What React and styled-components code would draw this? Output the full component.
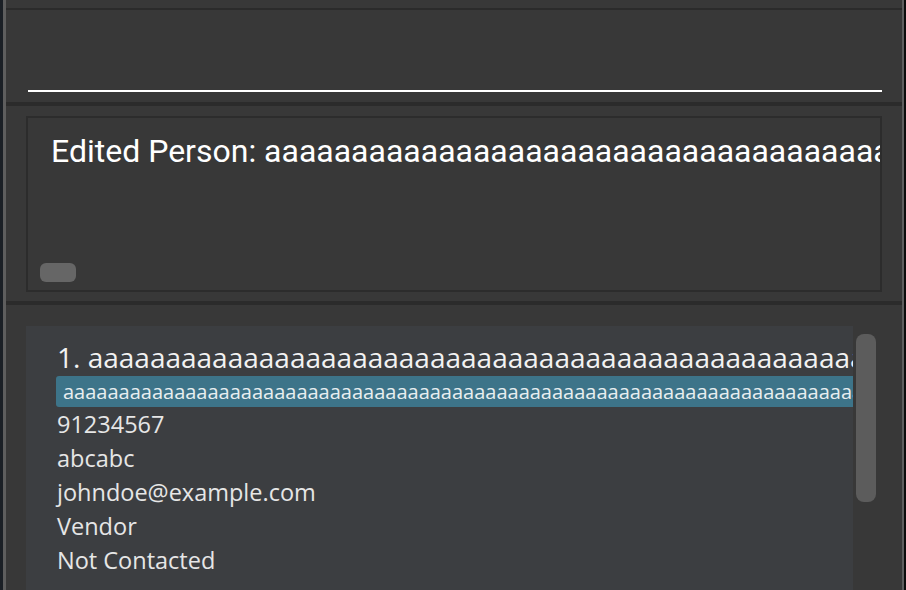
import React from 'react';
import styled, { createGlobalStyle } from 'styled-components';

const GlobalStyle = createGlobalStyle`
    html, body {
        margin: 0;
        padding: 0;
        background: #383838;
        overflow: hidden;
    }
`;

const Window = styled.div`
    display: flex;
    flex-direction: column;
    width: 906px;
    height: 590px;
    box-sizing: border-box;
    background: #383838;
    border-left: 3px solid #1b2026;
    border-right: 2px solid #0c0c0c;
    font-family: "Open Sans", "Liberation Sans", sans-serif;
    color: #ffffff;
    overflow: hidden;
`;

const Inner = styled.div`
    display: flex;
    flex-direction: column;
    flex: 1;
    min-height: 0;
    border-left: 3px solid #5e5e5e;
    border-right: 2px solid #5e5e5e;
`;

const Divider = styled.div`
    flex: none;
    height: ${props => props.size}px;
    background: #2b2b2b;
`;

const TopStub = styled.div`
    flex: none;
    height: 8px;
`;

const CommandPane = styled.div`
    flex: none;
    height: 92px;
    box-sizing: border-box;
    display: flex;
    align-items: flex-end;
    padding: 0 20px 10px 22px;
`;

const CommandInput = styled.div`
    flex: 1;
    height: 0;
    border-bottom: 2px solid #ffffff;
`;

const ResultPane = styled.div`
    flex: none;
    height: 195px;
    box-sizing: border-box;
    padding: 10px 20px 9px 20px;
    display: flex;
`;

const ResultBox = styled.div`
    position: relative;
    flex: 1;
    border: 2px solid #2c2c2c;
    overflow: hidden;
    padding: 13px 0 0 23px;
`;

const ResultText = styled.div`
    font-family: Roboto, "Open Sans", sans-serif;
    font-size: 32px;
    line-height: 40px;
    white-space: nowrap;
    color: #ffffff;
`;

const HThumb = styled.div`
    position: absolute;
    left: 12px;
    bottom: 8px;
    width: 36px;
    height: 19px;
    border-radius: 6px;
    background: #666666;
`;

const ListPane = styled.div`
    flex: 1;
    min-height: 0;
    display: flex;
    padding: 21px 23px 0 20px;
    overflow: hidden;
`;

const Card = styled.div`
    flex: 1;
    min-width: 0;
    background: #3c3e41;
    padding: 13px 0 0 31px;
    overflow: hidden;
`;

const Gutter = styled.div`
    flex: none;
    width: 26px;
    display: flex;
    justify-content: center;
    padding-top: 8px;
`;

const VThumb = styled.div`
    width: 20px;
    height: 168px;
    border-radius: 8px;
    background: #5c5c5c;
`;

const Title = styled.div`
    font-size: 28px;
    line-height: 36px;
    white-space: nowrap;
    color: #f2f2f2;
`;

const Tag = styled.div`
    margin: 1px 0 0 -1px;
    height: 31px;
    line-height: 31px;
    padding-left: 7px;
    background: #3d7489;
    border-radius: 3px 0 0 3px;
    font-size: 20px;
    white-space: nowrap;
    overflow: hidden;
    color: #e8eef0;
`;

const Field = styled.div`
    font-size: 23.5px;
    line-height: 34px;
    white-space: nowrap;
    color: #e6e6e6;
`;

const longName = 'a'.repeat(60);

export default function App() {
    return (
        <>
            <GlobalStyle />
            <Window>
                <Inner>
                    <TopStub />
                    <Divider size={2} />
                    <CommandPane>
                        <CommandInput />
                    </CommandPane>
                    <Divider size={4} />
                    <ResultPane>
                        <ResultBox>
                            <ResultText>Edited Person: {longName}</ResultText>
                            <HThumb />
                        </ResultBox>
                    </ResultPane>
                    <Divider size={4} />
                    <ListPane>
                        <Card>
                            <Title>1. {longName}</Title>
                            <Tag>{'a'.repeat(90)}</Tag>
                            <Field>91234567</Field>
                            <Field>abcabc</Field>
                            <Field>johndoe@example.com</Field>
                            <Field>Vendor</Field>
                            <Field>Not Contacted</Field>
                        </Card>
                        <Gutter>
                            <VThumb />
                        </Gutter>
                    </ListPane>
                </Inner>
            </Window>
        </>
    );
}
